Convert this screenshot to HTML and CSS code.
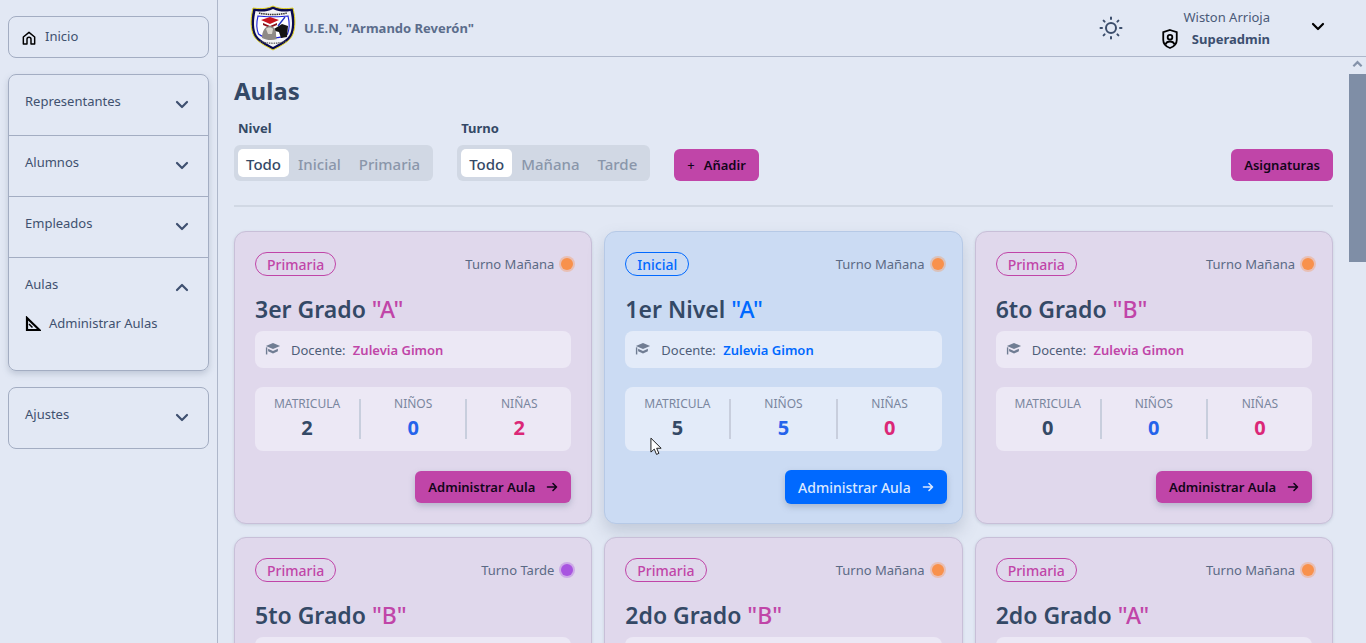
FILE: index.html
```html
<!DOCTYPE html>
<html lang="es">
<head>
<meta charset="utf-8">
<title>Aulas</title>
<link rel="stylesheet" href="styles.css">
</head>
<body>
<aside class="sidebar">
  <a class="nav-box nav-home">
    <svg class="home-icon" viewBox="0 0 24 24" fill="none" stroke="#000" stroke-width="2.2" stroke-linejoin="round" stroke-linecap="round"><path d="M3.5 10.5 12 3.5l8.5 7V21h-5.500v-7a3 3 0 0 0-6 0v7H3.500z"/></svg>
    <span>Inicio</span>
  </a>
  <div class="nav-box nav-group nav-group-open">
    <div class="nav-item"><span>Representantes</span><svg class="chev" viewBox="0 0 14 9"><path d="M2 2l5 5 5-5"/></svg></div>
    <div class="nav-item"><span>Alumnos</span><svg class="chev" viewBox="0 0 14 9"><path d="M2 2l5 5 5-5"/></svg></div>
    <div class="nav-item"><span>Empleados</span><svg class="chev" viewBox="0 0 14 9"><path d="M2 2l5 5 5-5"/></svg></div>
    <div class="nav-item nav-item-open"><span>Aulas</span><svg class="chev" viewBox="0 0 14 9"><path d="M2 7l5-5 5 5"/></svg></div>
    <div class="nav-sub">
      <svg class="sq-icon" viewBox="0 0 16 16" fill="none" stroke="#000" stroke-width="2.200"><path d="M2 2v12h12.500z" stroke-linejoin="miter"/><path d="M4 8l3.500 3.500" stroke-width="1.500"/></svg>
      <span>Administrar Aulas</span>
    </div>
  </div>
  <div class="nav-box nav-group">
    <div class="nav-item nav-item-last"><span>Ajustes</span><svg class="chev" viewBox="0 0 14 9"><path d="M2 2l5 5 5-5"/></svg></div>
  </div>
</aside>

<div class="main">
  <header class="topbar">
    <div class="brand">
      <svg class="logo" viewBox="0 0 46 46">
        <path d="M23 1 C29 4 36 4 43 3 C45 12 46 20 43 29 C40 37 30 41 23 45 C16 41 6 37 3 29 C0 20 1 12 3 3 C10 4 17 4 23 1z" fill="#0a0a50" stroke="#e8d820" stroke-width="1"/>
        <path d="M23 4 C29 7 35 7 40.500 6 C42 13 43 20 40.500 28 C38 35 29 38.500 23 42 C17 38.500 8 35 5.500 28 C3 20 4 13 5.500 6 C11 7 17 7 23 4z" fill="#f4f4f6"/>
        <path d="M8 11 C14 12 32 12 38 11 C39.500 17 40 23 37.500 29 C32 34 14 34 8.500 29 C6 23 6.500 17 8 11z" fill="#fff" stroke="#1c22d8" stroke-width="1.100"/>
        <path d="M11 15l9-3 9 3-9 4z" fill="#c8141e"/>
        <path d="M13 18l7 3 7-3v2l-7 3-7-3z" fill="#8a1018"/>
        <path d="M24 24l8-5 6 2-1 11-6 1-2-6-4-1z" fill="#141414"/>
        <path d="M28 21l7-9" stroke="#2030c0" stroke-width="1.300"/>
        <path d="M12 33c0-7 3-12 8-12 4 0 6 4 6 7 0 2 0 4 1 6-5 2-11 1-15-1z" fill="#8e8a86"/>
        <path d="M16 24c1-2 6-2 7 0l-1 5-4 0z" fill="#d8d4cc"/>
        <path d="M10 36c6 3 20 3 26 0" stroke="#555" stroke-width="1.200" fill="none" stroke-dasharray="1.500 .8"/>
        <path d="M9 8c8 2 20 2 28 0" stroke="#333" stroke-width="1.500" fill="none" stroke-dasharray="1.500 .7"/>
      </svg>
      <span>U.E.N, "Armando Reverón"</span>
    </div>
    <div class="top-right">
      <svg class="sun" viewBox="0 0 24 24" fill="none" stroke="#3b4d6b" stroke-width="2" stroke-linecap="round"><circle cx="12" cy="12" r="5"/><path d="M12 1.500v1.500M12 21v1.500M1.500 12H3M21 12h1.500M4.600 4.600l1 1M18.400 18.400l1 1M4.600 19.400l1-1M18.400 5.600l1-1"/></svg>
      <div class="user">
        <div class="user-name">Wiston Arrioja</div>
        <div class="user-role">
          <svg class="shield" viewBox="0 0 20 24" fill="none" stroke="#000" stroke-width="2"><path d="M10 2l7.500 2.500V13c0 4.500-3.500 7.500-7.500 9-4-1.500-7.500-4.500-7.500-9V4.500z"/><circle cx="10" cy="10" r="2.600"/><path d="M5 18c1-2.500 3-3.200 5-3.200s4 .7 5 3.200"/></svg>
          <b>Superadmin</b>
        </div>
      </div>
      <svg class="chev chev-dark" viewBox="0 0 14 9"><path d="M2 2l5 5 5-5"/></svg>
    </div>
  </header>

  <div class="body-row">
    <main class="content">
      <h1>Aulas</h1>
      <div class="filters">
        <div class="filter">
          <div class="filter-label">Nivel</div>
          <div class="segment"><span class="seg on">Todo</span><span class="seg">Inicial</span><span class="seg">Primaria</span></div>
        </div>
        <div class="filter">
          <div class="filter-label">Turno</div>
          <div class="segment"><span class="seg on">Todo</span><span class="seg">Mañana</span><span class="seg">Tarde</span></div>
        </div>
        <button class="btn btn-add"><span class="plus">+</span>Añadir</button>
        <button class="btn btn-subjects">Asignaturas</button>
      </div>
      <hr class="rule">
      <div class="grid">

        <article class="card">
          <div class="card-top"><span class="badge">Primaria</span><span class="turno">Turno Mañana<i class="dot dot-am"></i></span></div>
          <h2>3er Grado <em>"A"</em></h2>
          <div class="teacher"><svg class="cap" viewBox="0 0 18 18"><path d="M9 1 1 4.500 9 8l8-3.500z"/><path d="M3.500 7.500v3L9 13l5.500-2.500v-3L9 10z"/><path d="M1 6h1.600v8H1z"/></svg>Docente: <b>Zulevia Gimon</b></div>
          <div class="stats">
            <div class="stat"><small>MATRICULA</small><strong>2</strong></div>
            <div class="stat"><small>NIÑOS</small><strong class="boys">0</strong></div>
            <div class="stat"><small>NIÑAS</small><strong class="girls">2</strong></div>
          </div>
          <div class="card-foot"><button class="btn btn-go">Administrar Aula<svg class="arrow" viewBox="0 0 12 12"><path d="M1.500 6h9M7 2.500 10.500 6 7 9.500"/></svg></button></div>
        </article>

        <article class="card card-blue">
          <div class="card-top"><span class="badge">Inicial</span><span class="turno">Turno Mañana<i class="dot dot-am"></i></span></div>
          <h2>1er Nivel <em>"A"</em></h2>
          <div class="teacher"><svg class="cap" viewBox="0 0 18 18"><path d="M9 1 1 4.500 9 8l8-3.500z"/><path d="M3.500 7.500v3L9 13l5.500-2.500v-3L9 10z"/><path d="M1 6h1.600v8H1z"/></svg>Docente: <b>Zulevia Gimon</b></div>
          <div class="stats">
            <div class="stat"><small>MATRICULA</small><strong>5</strong></div>
            <div class="stat"><small>NIÑOS</small><strong class="boys">5</strong></div>
            <div class="stat"><small>NIÑAS</small><strong class="girls">0</strong></div>
          </div>
          <div class="card-foot"><button class="btn btn-go">Administrar Aula<svg class="arrow" viewBox="0 0 12 12"><path d="M1.500 6h9M7 2.500 10.500 6 7 9.500"/></svg></button></div>
        </article>

        <article class="card">
          <div class="card-top"><span class="badge">Primaria</span><span class="turno">Turno Mañana<i class="dot dot-am"></i></span></div>
          <h2>6to Grado <em>"B"</em></h2>
          <div class="teacher"><svg class="cap" viewBox="0 0 18 18"><path d="M9 1 1 4.500 9 8l8-3.500z"/><path d="M3.500 7.500v3L9 13l5.500-2.500v-3L9 10z"/><path d="M1 6h1.600v8H1z"/></svg>Docente: <b>Zulevia Gimon</b></div>
          <div class="stats">
            <div class="stat"><small>MATRICULA</small><strong>0</strong></div>
            <div class="stat"><small>NIÑOS</small><strong class="boys">0</strong></div>
            <div class="stat"><small>NIÑAS</small><strong class="girls">0</strong></div>
          </div>
          <div class="card-foot"><button class="btn btn-go">Administrar Aula<svg class="arrow" viewBox="0 0 12 12"><path d="M1.500 6h9M7 2.500 10.500 6 7 9.500"/></svg></button></div>
        </article>

        <article class="card">
          <div class="card-top"><span class="badge">Primaria</span><span class="turno">Turno Tarde<i class="dot dot-pm"></i></span></div>
          <h2>5to Grado <em>"B"</em></h2>
          <div class="teacher"></div>
        </article>
        <article class="card">
          <div class="card-top"><span class="badge">Primaria</span><span class="turno">Turno Mañana<i class="dot dot-am"></i></span></div>
          <h2>2do Grado <em>"B"</em></h2>
          <div class="teacher"></div>
        </article>
        <article class="card">
          <div class="card-top"><span class="badge">Primaria</span><span class="turno">Turno Mañana<i class="dot dot-am"></i></span></div>
          <h2>2do Grado <em>"A"</em></h2>
          <div class="teacher"></div>
        </article>
      </div>
    </main>
    <div class="scrollbar">
      <svg class="sb-arrow" viewBox="0 0 12 8"><path d="M1.500 6.500 6 2l4.500 4.500"/></svg>
      <div class="sb-thumb"></div>
    </div>
  </div>
</div>

<svg class="cursor" viewBox="0 0 14 20"><path d="M1 1v15l3.600-3.200 2.400 5.700 2.600-1.100-2.400-5.500H12z" fill="#fff" stroke="#111" stroke-width="1"/></svg>
</body>
</html>
```
FILE: styles.css
```css
* { box-sizing: border-box; }
html, body { height: 100%; }
body {
  margin: 0;
  height: 643px;
  overflow: hidden;
  display: flex;
  background: #e2e8f4;
  color: #344966;
  font-family: "Noto Sans", "Open Sans", sans-serif;
  font-size: 13px;
}

/* Sidebar */
.sidebar {
  width: 218px;
  flex: none;
  border-right: 1px solid #aeb7ca;
  padding: 16px 8px 0;
  display: flex;
  flex-direction: column;
  gap: 16px;
}
.nav-box {
  width: 201px;
  border: 1px solid #a3adc2;
  border-radius: 8px;
}
.nav-home {
  height: 42px;
  display: flex;
  align-items: flex-start;
  padding: 10px 12px;
  gap: 8px;
  color: #40516f;
}
.home-icon { width: 16px; height: 16px; margin-top: 3px; }
.nav-group-open { box-shadow: 0 3px 6px rgba(100, 116, 139, .28); }
.nav-item {
  height: 61px;
  display: flex;
  justify-content: space-between;
  align-items: flex-start;
  padding: 17px 19px 0 16px;
  border-bottom: 1px solid #a3adc2;
  color: #40516f;
}
.nav-item span { line-height: 19px; }
.nav-item-open, .nav-item-last { border-bottom: 0; }
.nav-item-last { height: 60px; }
.nav-sub {
  height: 56px;
  margin-top: -5px;
  padding-left: 16px;
  display: flex;
  align-items: flex-start;
  gap: 8px;
  color: #40516f;
}
.nav-sub span { line-height: 18px; }
.sq-icon { width: 16px; height: 16px; margin-top: 2px; }
.chev {
  width: 14px;
  height: 9px;
  margin-top: 8px;
  fill: none;
  stroke: #3f5070;
  stroke-width: 2.200;
  stroke-linecap: round;
  stroke-linejoin: round;
}
.chev-dark { stroke: #000; margin: 0 0 0 0; }

/* Top bar */
.main { flex: 1; min-width: 0; display: flex; flex-direction: column; }
.topbar {
  height: 57px;
  flex: none;
  border-bottom: 1px solid #aeb7ca;
  display: flex;
  justify-content: space-between;
  align-items: center;
  padding: 0 41px 0 32px;
}
.brand {
  display: flex;
  align-items: center;
  gap: 8px;
  font-weight: 700;
  font-size: 13px;
  color: #5b6d8c;
}
.logo { width: 46px; height: 46px; }
.top-right { display: flex; align-items: center; }
.sun { width: 24px; height: 24px; margin-right: 38px; }
.user { width: 109px; text-align: right; line-height: 22px; }
.user-name { color: #4a5a78; }
.user-role { display: flex; justify-content: space-between; align-items: center; }
.user-role b { color: #3c4f6f; }
.shield { width: 18px; height: 22px; }
.chev-dark { margin-left: 41px; margin-top: -3px; }

/* Content */
.body-row { flex: 1; min-height: 0; display: flex; }
.content { flex: 1; min-width: 0; overflow: hidden; padding: 20px 16px 0; }
h1 { margin: 0; font-size: 24px; line-height: 28px; font-weight: 700; color: #344966; }
.filters { display: flex; align-items: flex-end; gap: 24px; margin-top: 14px; }
.filter-label { font-weight: 700; font-size: 13px; line-height: 18px; padding-left: 4px; margin-bottom: 8px; }
.segment {
  display: flex;
  height: 36px;
  padding: 4px;
  background: #d1d8e4;
  border-radius: 6px;
  font-size: 15px;
  font-weight: 500;
  color: #8a96aa;
}
.seg { padding: 0 9px; line-height: 30px; }
.seg.on { background: #fff; color: #344966; border-radius: 5px; padding: 0 8px; }
.btn {
  border: 0;
  font-family: inherit;
  font-weight: 600;
  font-size: 13px;
  color: #12051a;
  background: #c045a8;
  border-radius: 6px;
  height: 32px;
  display: inline-flex;
  align-items: center;
  justify-content: center;
  padding: 0 13px;
}
.plus { margin-right: 9px; font-weight: 500; }
.btn-subjects { margin-left: auto; }
.rule { border: 0; height: 2px; background: #d1d8e4; margin: 24px 0 24px; }
.grid { display: grid; grid-template-columns: repeat(3, 1fr); gap: 13px 12px; }
.card {
  height: 293px;
  background: #e0d8ec;
  border: 1px solid #c8bfd8;
  border-radius: 12px;
  padding: 20px;
  box-shadow: 0 1px 3px rgba(100, 116, 139, .2);
}
.card-top { display: flex; justify-content: space-between; align-items: center; height: 24px; }
.badge {
  height: 24px;
  line-height: 23px;
  border: 1px solid #c045a8;
  border-radius: 12px;
  padding: 0 11px;
  font-size: 14px;
  font-weight: 500;
  color: #c045a8;
}
.turno { display: flex; align-items: center; color: #5b6a85; font-size: 13px; margin-right: -2px; }
.dot { width: 12px; height: 12px; margin-left: 7px; border-radius: 50%; }
.dot-am { background: #f8914c; box-shadow: 0 0 0 2px rgba(248, 145, 76, .35); }
.dot-pm { background: #a855e0; box-shadow: 0 0 0 2px rgba(168, 85, 224, .35); }
h2 { margin: 19px 0 0; font-size: 23px; line-height: 28px; font-weight: 600; color: #344966; }
h2 em { font-style: normal; color: #c045a8; font-weight: 500; }
.teacher {
  margin-top: 8px;
  height: 37px;
  background: #ece8f5;
  border-radius: 8px;
  display: flex;
  align-items: center;
  padding-left: 10px;
  color: #4e5d78;
  white-space: pre;
}
.teacher b { margin-left: 4px; font-weight: 600; color: #c045a8; }
.cap { width: 16px; height: 16px; margin-right: 10px; fill: #707d93; }
.stats {
  margin-top: 19px;
  height: 64px;
  background: #ece8f5;
  border-radius: 8px;
  display: flex;
  padding: 12px 0;
}
.stat { flex: 1; display: flex; flex-direction: column; align-items: center; border-left: 2px solid #c8cedd; }
.stat:first-child { border-left: 0; }
.stat small { font-size: 12px; line-height: 16px; color: #7a869e; margin-top: -3px; }
.stat strong { font-size: 20px; line-height: 26px; margin-top: 3px; color: #344966; font-weight: 700; }
.stat strong.boys { color: #2563eb; }
.stat strong.girls { color: #db2777; }
.card-foot { display: flex; justify-content: flex-end; margin-top: 20px; }
.btn-go { box-shadow: 0 3px 6px rgba(100, 116, 139, .35); }
.arrow { width: 12px; height: 12px; margin-left: 11px; fill: none; stroke: currentColor; stroke-width: 1.600; stroke-linecap: round; stroke-linejoin: round; }

.card-blue { background: #cbdbf3; border-color: #b6c9e6; box-shadow: 0 8px 16px rgba(100, 116, 139, .25); }
.card-blue em, .card-blue .teacher b { color: #0069ff; }
.card-blue .badge { color: #0069ff; border-color: #0069ff; }
.card-blue .teacher, .card-blue .stats { background: #e3ebf9; }
.card-blue .card-foot { margin-top: 19px; margin-right: -5px; }
.card-blue .btn-go { height: 34px; background: #0069ff; color: #dbe8ff; padding: 0 13px; font-size: 14px; font-weight: 500; }

/* Scrollbar */
.scrollbar { width: 17px; flex: none; display: flex; flex-direction: column; align-items: center; padding-top: 3px; }
.sb-arrow { width: 11px; height: 8px; fill: none; stroke: #8593aa; stroke-width: 2.400; }
.sb-thumb { width: 17px; height: 188px; margin-top: 6px; background: #7f8ea6; }

.cursor { position: absolute; left: 650px; top: 437px; width: 13px; height: 19px; }
```
